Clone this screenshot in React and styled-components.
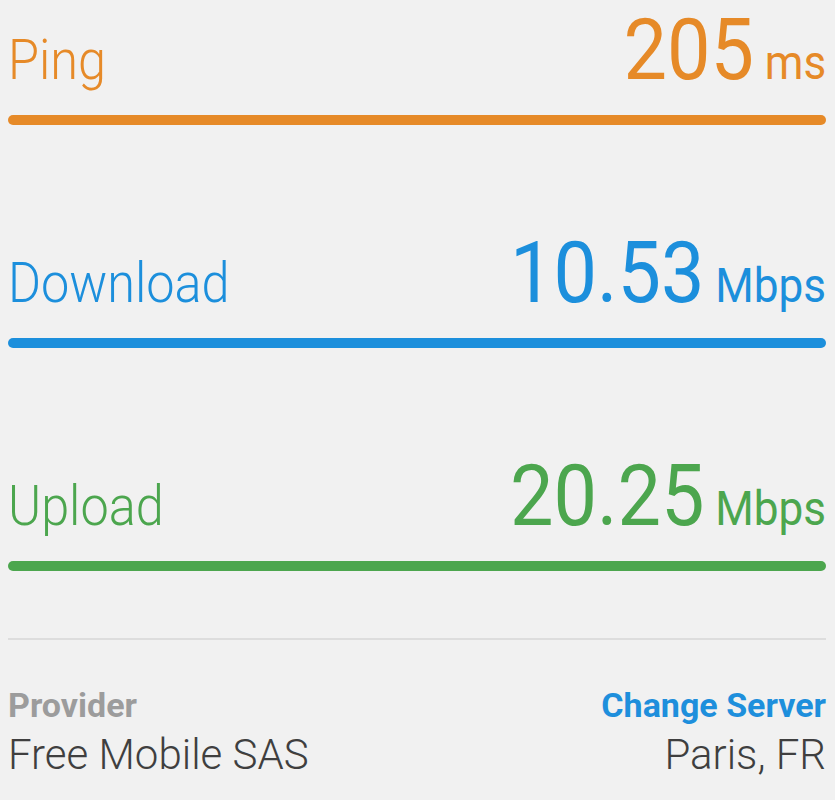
import React from "react";
import styled, { createGlobalStyle } from "styled-components";

const GlobalStyle = createGlobalStyle`
    html, body {
        margin: 0;
        padding: 0;
        background: #f1f1f1;
    }
    body {
        font-family: Roboto, "Noto Sans", "Liberation Sans", sans-serif;
    }
`

const Screen = styled.div`
    width: 835px;
    height: 800px;
    box-sizing: border-box;
    padding: 7px 9px 0 8px;
    background: #f1f1f1;
    overflow: hidden;
`

const Metrics = styled.div`
    display: flex;
    flex-direction: column;
    gap: 105px;
`

const Header = styled.div`
    display: flex;
    justify-content: space-between;
    align-items: baseline;
    color: ${props => props.color};
`

// the big figures are a bit narrower than Roboto, so squeeze them slightly
const Label = styled.span`
    display: inline-block;
    font-size: 56px;
    font-weight: 300;
    line-height: 1;
    transform: scaleX(0.9);
    transform-origin: left bottom;
`

const Value = styled.span`
    display: inline-flex;
    align-items: baseline;
    line-height: 1;
    transform: scaleX(0.9);
    transform-origin: right bottom;
`

const Number = styled.span`
    font-size: 86px;
    font-weight: 400;
`

const Unit = styled.span`
    font-size: 49px;
    font-weight: 400;
    margin-left: 12px;
`

const Bar = styled.div`
    height: 10px;
    margin-top: 22px;
    border-radius: 5px;
    background: ${props => props.color};
`

const Divider = styled.hr`
    border: none;
    height: 2px;
    margin: 67px 0 0;
    background: #dddddd;
`

const Footer = styled.div`
    display: grid;
    grid-template-columns: 1fr 1fr;
    margin-top: 48px;
`

const Column = styled.div`
    display: flex;
    flex-direction: column;
    align-items: ${props => (props.right ? "flex-end" : "flex-start")};
    gap: 12px;
`

const Title = styled.span`
    font-size: 34px;
    font-weight: 700;
    line-height: 1;
    color: ${props => (props.link ? "#1e8fdc" : "#9c9c9c")};
    cursor: ${props => (props.link ? "pointer" : "default")};
`

const Info = styled.span`
    font-size: 42px;
    font-weight: 300;
    line-height: 1;
    color: #3f3f3f;
`

const metrics = [
    { label: "Ping", value: "205", unit: "ms", color: "#e68a28" },
    { label: "Download", value: "10.53", unit: "Mbps", color: "#1c8fdc" },
    { label: "Upload", value: "20.25", unit: "Mbps", color: "#4ca64e" },
];

const Metric = ({ label, value, unit, color }) => (
    <div>
        <Header color={color}>
            <Label>{label}</Label>
            <Value>
                <Number>{value}</Number>
                <Unit>{unit}</Unit>
            </Value>
        </Header>
        <Bar color={color} />
    </div>
);

export default function App() {
    return (
        <>
            <GlobalStyle />
            <Screen>
                <Metrics>
                    {metrics.map(m => <Metric key={m.label} {...m} />)}
                </Metrics>
                <Divider />
                <Footer>
                    <Column>
                        <Title>Provider</Title>
                        <Info>Free Mobile SAS</Info>
                    </Column>
                    <Column right>
                        <Title link>Change Server</Title>
                        <Info>Paris, FR</Info>
                    </Column>
                </Footer>
            </Screen>
        </>
    );
}
